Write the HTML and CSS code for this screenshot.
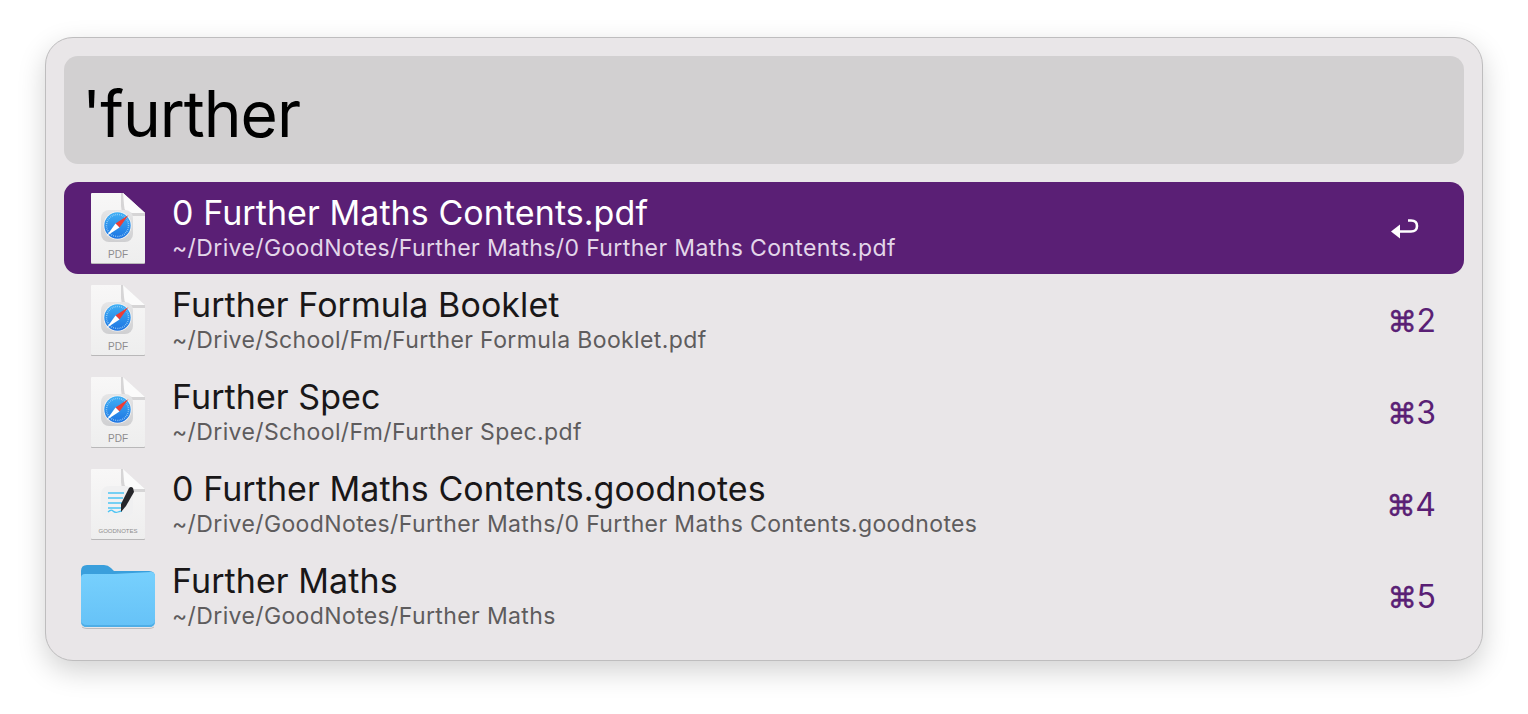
FILE: index.html
```html
<!doctype html>
<html lang="en">
<head>
    <meta charset="UTF-8">
    <title>Alfred</title>
    <link rel="stylesheet" href="styles.css">
</head>

<body>
<svg class="defs" width="0" height="0">
    <defs>
        <linearGradient id="dial" x1="0" y1="0" x2="0" y2="1">
            <stop offset="0" stop-color="#3fb0f5"/>
            <stop offset="1" stop-color="#1d74e2"/>
        </linearGradient>
        <linearGradient id="sheet" x1="0" y1="0" x2="0" y2="1">
            <stop offset="0" stop-color="#f8f7f7"/>
            <stop offset="1" stop-color="#eeeeee"/>
        </linearGradient>
        <linearGradient id="tile" x1="0" y1="0" x2="0" y2="1">
            <stop offset="0" stop-color="#e6e6e7"/>
            <stop offset="1" stop-color="#cfcfd1"/>
        </linearGradient>
        <linearGradient id="folderFront" x1="0" y1="0" x2="0" y2="1">
            <stop offset="0" stop-color="#77d0fd"/>
            <stop offset="1" stop-color="#66c2f7"/>
        </linearGradient>
        <symbol id="page" viewBox="0 0 56 72">
            <path d="M2 3H33L55 23V71Q55 72 54 72H2Q1 72 1 71V4Q1 3 2 3Z" fill="#b9b8b9"/>
            <path d="M2 1H33L55 21V70Q55 71 54 71H2Q1 71 1 70V2Q1 1 2 1Z" fill="url(#sheet)"/>
            <path d="M31 1H33L55 21V24H41Q31 24 31 14Z" fill="#d6d5d6"/>
            <path d="M33 1L55 21H42Q34 21 34 13Z" fill="#fbfbfb"/>
        </symbol>
        <symbol id="pdf" viewBox="0 0 56 72">
            <use href="#page" width="56" height="72"/>
            <rect x="11" y="18" width="32" height="32" rx="8" fill="url(#tile)"/>
            <circle cx="27.5" cy="33.5" r="14" fill="#f4f4f5"/>
            <circle cx="27.5" cy="33.5" r="13.2" fill="url(#dial)"/>
            <circle cx="27.5" cy="33.5" r="11" fill="none" stroke="#a5d4f7" stroke-width="1.5" stroke-dasharray=".7 1.2"/>
            <path d="M38.5 23L29.5 35.5L25.5 31.5Z" fill="#ee3d35"/>
            <path d="M16.5 44L25.5 31.5L29.5 35.5Z" fill="#fff"/>
            <text class="kind" x="28" y="66">PDF</text>
        </symbol>
        <symbol id="notes" viewBox="0 0 56 72">
            <use href="#page" width="56" height="72"/>
            <rect x="11" y="18" width="32" height="32" rx="8" fill="#f0f0f1"/>
            <path d="M18 25H34M18 30H33M18 35H33M18 40H31" stroke="#4cc4f4" stroke-width="1.6" fill="none"/>
            <path d="M18 44Q21 41 23 43T28 44T32 43" stroke="#4cc4f4" stroke-width="1.3" fill="none"/>
            <path d="M39 20Q41 18 43 20L44 24L36 38L31 44L31 36Z" fill="#26262a"/>
            <text class="kind small" x="28" y="65">GOODNOTES</text>
        </symbol>
        <symbol id="folder" viewBox="0 0 76 66">
            <path d="M1 8Q1 2 7 2H24Q28 2 31 5L34 8H69Q75 8 75 14V40H1Z" fill="#3a9fdc"/>
            <path d="M1 15Q1 11 5 11H34L71 9Q75 9 75 13V58Q75 64 69 64H7Q1 64 1 58Z" fill="url(#folderFront)"/>
            <path d="M1 58V56Q1 62 7 62H69Q75 62 75 56V58Q75 64 69 64H7Q1 64 1 58Z" fill="#4faee6"/>
            <path d="M2 64Q4 65.5 7 65.5H69Q72 65.5 74 64" fill="none" stroke="#bdbcbd"/>
        </symbol>
    </defs>
</svg>

<div class="panel">
    <div class="search">'further</div>
    <ul class="results">
        <li class="row selected">
            <svg class="icon"><use href="#pdf"/></svg>
            <div class="info">
                <div class="name">0 Further Maths Contents.pdf</div>
                <div class="path">~/Drive/GoodNotes/Further Maths/0 Further Maths Contents.pdf</div>
            </div>
            <svg class="enter" viewBox="0 0 28 22">
                <path d="M17 3.5H20Q26 3.5 26 9T20 14.5H7" fill="none" stroke="#fff" stroke-width="2.6"/>
                <path d="M0 14.5L9 7.5V21.5Z" fill="#fff"/>
            </svg>
        </li>
        <li class="row">
            <svg class="icon"><use href="#pdf"/></svg>
            <div class="info">
                <div class="name">Further Formula Booklet</div>
                <div class="path">~/Drive/School/Fm/Further Formula Booklet.pdf</div>
            </div>
            <div class="key"><span class="cmd">⌘</span>2</div>
        </li>
        <li class="row">
            <svg class="icon"><use href="#pdf"/></svg>
            <div class="info">
                <div class="name">Further Spec</div>
                <div class="path">~/Drive/School/Fm/Further Spec.pdf</div>
            </div>
            <div class="key"><span class="cmd">⌘</span>3</div>
        </li>
        <li class="row">
            <svg class="icon"><use href="#notes"/></svg>
            <div class="info">
                <div class="name">0 Further Maths Contents.goodnotes</div>
                <div class="path">~/Drive/GoodNotes/Further Maths/0 Further Maths Contents.goodnotes</div>
            </div>
            <div class="key"><span class="cmd">⌘</span>4</div>
        </li>
        <li class="row">
            <svg class="icon wide"><use href="#folder"/></svg>
            <div class="info">
                <div class="name">Further Maths</div>
                <div class="path">~/Drive/GoodNotes/Further Maths</div>
            </div>
            <div class="key"><span class="cmd">⌘</span>5</div>
        </li>
    </ul>
</div>
</body>
</html>
```

FILE: styles.css
```css
*{
    margin: 0;
    padding: 0;
    list-style: none;
    box-sizing: border-box;
}
html{
    height: 100%;
}
body{
    height: 100%;
    padding: 37px 45px 0;
    background: #fff;
    font-family: Inter, "Liberation Sans", sans-serif;
    overflow: hidden;
}
.defs{
    display: block;
    height: 0;
}
.panel{
    width: 1438px;
    height: 624px;
    padding: 18px;
    background: #e9e6e8;
    border: 1px solid #bebdbe;
    border-radius: 28px;
    box-shadow: 0 10px 28px rgba(0,0,0,.18);
}
.search{
    height: 108px;
    padding-left: 18px;
    background: #d2d0d1;
    border-radius: 14px;
    color: #000;
    font-size: 64px;
    line-height: 116px;
    letter-spacing: -1px;
}
.results{
    margin-top: 18px;
}
.row{
    display: flex;
    align-items: center;
    height: 92px;
    padding: 0 28px 0 26px;
    border-radius: 14px;
    color: #191718;
}
.row.selected{
    background: #5a1f75;
    color: #fff;
}
.icon{
    flex: none;
    width: 56px;
    height: 72px;
    margin-right: 26px;
}
.icon.wide{
    width: 76px;
    height: 66px;
    margin: 0 16px 0 -10px;
}
.kind{
    fill: #8d8c8d;
    font-family: "Liberation Sans", sans-serif;
    font-size: 10px;
    text-anchor: middle;
}
.kind.small{
    font-size: 6px;
}
.info{
    flex: 1;
    padding-top: 2px;
}
.name{
    font-size: 34px;
    line-height: 34px;
    letter-spacing: .07px;
}
.path{
    margin-top: 4px;
    font-size: 23px;
    line-height: 28px;
    letter-spacing: .38px;
    color: #5e5c5d;
}
.selected .path{
    color: #e3d6e9;
}
.key{
    padding-top: 2px;
    color: #5a1f75;
    font-size: 32px;
    line-height: 38px;
}
.cmd{
    font-family: "DejaVu Sans", sans-serif;
    font-size: 29px;
    -webkit-text-stroke: .5px #5a1f75;
}
.enter{
    width: 28px;
    height: 22px;
    margin-right: 17px;
}
```
